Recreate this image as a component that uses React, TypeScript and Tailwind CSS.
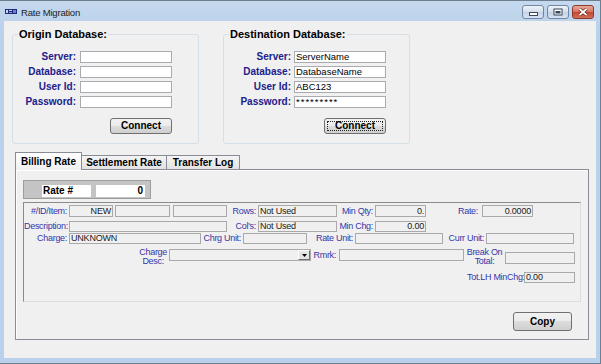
import React from 'react';

// Shared font stack for the whole window
const SANS = "font-['Liberation_Sans',Arial,sans-serif]";

interface BoxProps {
  className?: string;
  value?: string;
  right?: boolean;
  small?: boolean;
}

// Read-only field in the billing rate panel
function Box({className = '', value = '', right = false, small = false}: BoxProps) {
  const size = small ? 'h-[11px] leading-[9px]' : 'h-[12px] leading-[10px]';
  return (
    <div
      className={`${size} shrink-0 overflow-hidden whitespace-nowrap border border-[#a9a9a9] bg-[#f0f0f0] px-[1px] text-[9px] tracking-[-0.2px] text-[#1a1a1a] ${right ? 'text-right' : ''} ${className}`}
    >
      {value}
    </div>
  );
}

function Lbl({className = '', children}: {className?: string; children: React.ReactNode}) {
  return (
    <div
      className={`shrink-0 whitespace-nowrap text-right text-[9px] leading-[11px] tracking-[-0.3px] text-[#3636a8] ${className}`}
    >
      {children}
    </div>
  );
}

function GroupInput({value = '', password = false}: {value?: string; password?: boolean}) {
  return (
    <div
      className={`h-[12px] w-[92px] overflow-hidden whitespace-nowrap border border-[#a9abb0] bg-white px-[1px] text-[9.5px] leading-[10px] text-black ${password ? 'tracking-[1px]' : ''}`}
    >
      {value}
    </div>
  );
}

function GroupLabel({children}: {children: React.ReactNode}) {
  return (
    <div className="whitespace-nowrap text-right text-[10px] font-bold leading-[12px] text-[#20208c]">
      {children}
    </div>
  );
}

function PushButton({
  children,
  className = '',
  focused = false,
}: {
  children: React.ReactNode;
  className?: string;
  focused?: boolean;
}) {
  return (
    <button
      type="button"
      className={`flex rounded-[3px] border border-[#707070] bg-[linear-gradient(#f2f2f2_0%,#ebebeb_50%,#dddddd_50%,#cfcfcf_100%)] p-[2px] text-[10px] font-bold leading-none text-black ${className}`}
    >
      <span
        className={`flex flex-1 items-center justify-center border border-dotted ${focused ? 'border-[#222]' : 'border-transparent'}`}
      >
        {children}
      </span>
    </button>
  );
}

function DbGroup({
  title,
  labelCols,
  values,
  focused,
  className = '',
}: {
  title: string;
  labelCols: string;
  values: string[];
  focused?: boolean;
  className?: string;
}) {
  const labels = ['Server:', 'Database:', 'User Id:', 'Password:'];
  return (
    <fieldset className={`h-[116px] w-[187px] rounded-[3px] border border-[#d5dfe5] ${className}`}>
      <legend className="ml-[5px] px-[1px] text-[11px] font-bold leading-[13px] text-black">{title}</legend>
      <div className={`grid ${labelCols} gap-y-[3px] pt-[10px]`}>
        {labels.map((label, i) => (
          <React.Fragment key={label}>
            <GroupLabel>{label}</GroupLabel>
            <GroupInput value={values[i]} password={i === 3} />
          </React.Fragment>
        ))}
        <div />
        <PushButton className="mt-[7px] h-[16px] w-[62px] justify-self-end" focused={focused}>
          Connect
        </PushButton>
      </div>
    </fieldset>
  );
}

function TitleButtons() {
  return (
    <div className="ml-auto mr-[6px] mt-[4px] flex gap-[3px]">
      {/* Minimize */}
      <div className="flex h-[14px] w-[22px] items-end justify-center rounded-[3px] border border-[#7486a0] bg-[linear-gradient(#eef3f9,#d3deec_50%,#c2d2e6_50%,#d6e3f2)] pb-[2px]">
        <svg width="9" height="4" viewBox="0 0 9 4">
          <rect x="0.5" y="0.5" width="8" height="3" fill="#fff" stroke="#3b475a" />
        </svg>
      </div>
      {/* Maximize */}
      <div className="flex h-[14px] w-[22px] items-center justify-center rounded-[3px] border border-[#7486a0] bg-[linear-gradient(#eef3f9,#d3deec_50%,#c2d2e6_50%,#d6e3f2)]">
        <svg width="10" height="8" viewBox="0 0 10 8">
          <rect x="0.5" y="0.5" width="9" height="7" fill="#3b475a" />
          <rect x="1.5" y="1.5" width="7" height="5" fill="#fff" />
          <rect x="2.5" y="3" width="5" height="2.5" fill="#3b475a" />
        </svg>
      </div>
      {/* Close */}
      <div className="flex h-[14px] w-[22px] items-center justify-center rounded-[3px] border border-[#8d3a2e] bg-[linear-gradient(#e9a99b,#d7725e_50%,#c4442e_50%,#d2705b)]">
        <svg width="10" height="8" viewBox="0 0 10 8">
          <path d="M1.5 1 L8.5 7 M8.5 1 L1.5 7" stroke="#5b1d14" strokeWidth="3.2" />
          <path d="M1.5 1 L8.5 7 M8.5 1 L1.5 7" stroke="#fff" strokeWidth="1.8" />
        </svg>
      </div>
    </div>
  );
}

export default function App() {
  return (
    <div
      className={`flex h-[364px] w-[601px] flex-col border-b border-r border-t border-[#6f7f92] bg-[linear-gradient(#c5d9ee,#b9d1ea_30px,#b9d1ea)] ${SANS}`}
    >
      {/* Title bar */}
      <div className="flex h-[20px] shrink-0">
        <svg className="ml-[5px] mt-[8px]" width="12" height="5" viewBox="0 0 12 5">
          <rect width="12" height="5" fill="#1d2b78" />
          <rect x="1" y="1" width="2" height="3" fill="#c9d2f2" />
          <rect x="4" y="1" width="3" height="1" fill="#c9d2f2" />
          <rect x="4" y="3" width="3" height="1" fill="#8fa0e0" />
          <rect x="8" y="1" width="3" height="3" fill="#6d80d0" />
        </svg>
        <div className="ml-[4px] mt-[6px] text-[9.5px] leading-[12px] tracking-[-0.2px] text-[#1b1b1b]">
          Rate Migration
        </div>
        <TitleButtons />
      </div>

      {/* Client area */}
      <div className="ml-[4px] flex h-[337px] w-[592px] shrink-0 flex-col bg-[#f0f0f0]">
        <div className="ml-[8px] mt-[7px] flex">
          <DbGroup
            title="Origin Database:"
            labelCols="grid-cols-[63px_92px] gap-x-[4px]"
            values={['', '', '', '']}
          />
          <DbGroup
            className="ml-[24px]"
            title="Destination Database:"
            labelCols="grid-cols-[67px_92px] gap-x-[3px]"
            values={['ServerName', 'DatabaseName', 'ABC123', '*********']}
            focused
          />
        </div>

        {/* Tabs */}
        <div className="ml-[11px] mt-[8px] w-[574px]">
          <div className="flex h-[17px] items-end">
            <div className="relative -mb-px flex h-[18px] w-[67px] items-center justify-center border border-b-0 border-[#898c95] bg-[linear-gradient(#ffffff,#f0f0f0)] text-[10px] font-bold text-black">
              Billing Rate
            </div>
            <div className="flex h-[14px] w-[85px] items-center justify-center border border-b-0 border-l-0 border-[#898c95] bg-[linear-gradient(#f4f4f4,#e2e2e2)] text-[10px] font-bold text-black">
              Settlement Rate
            </div>
            <div className="flex h-[14px] w-[73px] items-center justify-center border border-b-0 border-l-0 border-[#898c95] bg-[linear-gradient(#f4f4f4,#e2e2e2)] text-[10px] font-bold text-black">
              Transfer Log
            </div>
          </div>

          <div className="h-[171px] border border-[#898c95] bg-[#f0f0f0] pl-[7px] pt-[10px] shadow-[inset_1px_1px_0_#fff]">
            {/* Rate # header */}
            <div className="flex h-[19px] w-[128px] gap-[5px] border border-[#9c9c9c] bg-[#c4c4c4] pl-[18px] pt-[4px]">
              <div className="h-[12px] w-[49px] bg-white pl-[1px] text-[10px] font-bold leading-[12px] text-black">
                Rate #
              </div>
              <div className="h-[12px] w-[49px] bg-white pr-[2px] text-right text-[10px] font-bold leading-[12px] text-black">
                0
              </div>
            </div>

            {/* Rate detail box */}
            <div className="mt-[3px] h-[100px] w-[558px] border border-b-[#dcdcdc] border-l-[#8a8a8a] border-r-[#dcdcdc] border-t-[#8a8a8a]">
              <div className="mt-[2px] flex items-center">
                <Lbl className="w-[43px]">#/ID/Item:</Lbl>
                <Box className="ml-[2px] w-[44px]" value="NEW" right />
                <Box className="ml-[2px] w-[55px]" />
                <Box className="ml-[3px] w-[54px]" />
                <Lbl className="w-[29px]">Rows:</Lbl>
                <Box className="ml-[2px] w-[79px]" value="Not Used" />
                <Lbl className="w-[36px]">Min Qty:</Lbl>
                <Box className="ml-[2px] w-[51px]" value="0." right />
                <Lbl className="w-[52px]">Rate:</Lbl>
                <Box className="ml-[4px] w-[51px]" value="0.0000" right />
              </div>

              <div className="mt-[4px] flex items-center">
                <Lbl className="w-[43px]">Description:</Lbl>
                <Box className="ml-[2px] w-[158px]" small />
                <Lbl className="w-[29px]">Col&apos;s:</Lbl>
                <Box className="ml-[2px] w-[79px]" value="Not Used" small />
                <Lbl className="w-[36px]">Min Chg:</Lbl>
                <Box className="ml-[2px] w-[51px]" value="0.00" right small />
              </div>

              <div className="mt-[1px] flex items-center">
                <Lbl className="w-[43px]">Charge:</Lbl>
                <Box className="ml-[2px] w-[132px]" value="UNKNOWN" small />
                <Lbl className="w-[40px]">Chrg Unit:</Lbl>
                <Box className="ml-[2px] w-[64px]" small />
                <Lbl className="w-[46px]">Rate Unit:</Lbl>
                <Box className="ml-[2px] w-[88px]" small />
                <Lbl className="w-[41px]">Curr Unit:</Lbl>
                <Box className="ml-[2px] w-[88px]" small />
              </div>

              <div className="mt-[4px] flex items-start">
                <div className="flex w-[145px] justify-end pr-[2px]">
                  <div className="text-center text-[9px] leading-[9px] tracking-[-0.3px] text-[#3636a8]">
                    Charge
                    <br />
                    Desc:
                  </div>
                </div>
                {/* Charge desc combo */}
                <div className="mt-[1px] flex h-[12px] w-[142px] border border-[#a9a9a9] bg-[#f0f0f0]">
                  <div className="flex-1" />
                  <div className="flex w-[12px] items-center justify-center border border-b-[#6f6f6f] border-l-white border-r-[#6f6f6f] border-t-white bg-[#e4e4e4]">
                    <svg width="5" height="3" viewBox="0 0 5 3">
                      <path d="M0 0h5L2.5 3z" fill="#000" />
                    </svg>
                  </div>
                </div>
                <Lbl className="mt-[1px] w-[25px] leading-[12px]">Rmrk:</Lbl>
                <Box className="ml-[3px] mt-[1px] w-[125px]" />
                <div className="w-[41px] text-center text-[9px] leading-[9px] tracking-[-0.3px] text-[#3636a8]">
                  Break On
                  <br />
                  Total:
                </div>
                <Box className="mt-[4px] w-[70px]" />
              </div>

              <div className="mt-[6px] flex items-center">
                <Lbl className="ml-[443px] w-[56px]">Tot.LH MinChg:</Lbl>
                <Box className="ml-[1px] w-[51px]" value="0.00" small />
              </div>
            </div>

            <PushButton className="ml-[490px] mt-[10px] h-[19px] w-[59px]">Copy</PushButton>
          </div>
        </div>
      </div>
    </div>
  );
}
